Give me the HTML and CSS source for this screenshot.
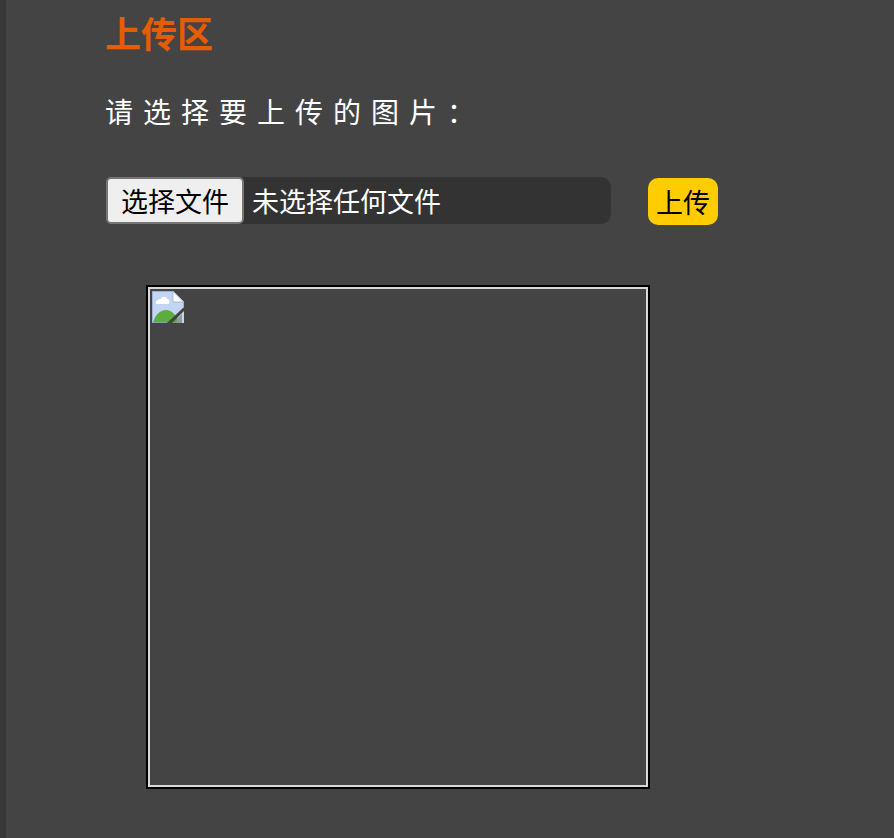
FILE: index.html
```html
<!DOCTYPE html>
<html lang="zh-CN">
<head>
<meta charset="utf-8">
<title>上传区</title>
<link rel="stylesheet" href="styles.css">
</head>
<body>
<div class="rail"></div>
<main class="content">
  <h2 class="title">上传区</h2>
  <p class="prompt">请选择要上传的图片：</p>
  <form class="upload-row">
    <div class="file-input">
      <button type="button" class="file-btn">选择文件</button>
      <span class="file-name">未选择任何文件</span>
    </div>
    <button type="button" class="submit">上传</button>
  </form>
  <div class="preview">
    <div class="preview-inner">
      <svg class="broken" width="32" height="32" viewBox="0 0 32 32" aria-hidden="true">
        <path d="M0 0H21L32 11V32H0Z" fill="#c3d5f2"/>
        <path d="M21 0L32 11H21Z" fill="#ffffff"/>
        <path d="M21 0V11H32" fill="none" stroke="#9fb4d6" stroke-width="0.8"/>
        <path d="M4 12C4 9 7 8 9 8C10 5 14 5 15 8C17 8 18 10 17 13H5C4 13 4 13 4 12Z" fill="#ffffff"/>
        <path d="M1 32C3 24 8 19 14 19C20 19 25 25 28 32Z" fill="#5cad3c"/>
        <path d="M15 32L32 16V20L20 32Z" fill="#444444"/>
        <path d="M26 27L30 23V32H24Z" fill="#8f9aa8"/>
        <path d="M0.4 32V0.4H21L31.6 11V17M0.4 31.6H15" fill="none" stroke="#8fa5c9" stroke-width="0.8"/>
      </svg>
    </div>
  </div>
</main>
</body>
</html>
```
FILE: styles.css
```css
* { box-sizing: border-box; }
html, body { margin: 0; height: 100%; }
body {
  background: #444444;
  color: #ffffff;
  font-family: "Liberation Sans", "Noto Sans CJK SC", sans-serif;
  display: flex;
  min-height: 838px;
  overflow: hidden;
}
.rail { width: 6px; background: #383838; flex: none; }
.content { padding: 0 0 0 100px; flex: 1; }
.title {
  margin: 0 0 0 -1px;
  padding-top: 14px;
  font-size: 36px;
  line-height: 44px;
  font-weight: 700;
  color: #e65c00;
}
.prompt {
  margin: 38px 0 0 -1px;
  height: 36px;
  font-size: 28px;
  line-height: 36px;
  letter-spacing: 10px;
}
.upload-row {
  display: flex;
  align-items: flex-start;
  margin-top: 45px;
}
.file-input {
  width: 505px;
  height: 47px;
  background: #333333;
  border-radius: 10px;
  display: flex;
  align-items: center;
  font-size: 27px;
}
.file-btn {
  width: 138px;
  height: 47px;
  padding: 0;
  background: #efefef;
  border: 2px solid #767676;
  border-radius: 5px;
  color: #000;
  font: inherit;
  font-size: 27px;
}
.file-name { margin-left: 8px; }
.submit {
  margin: 1px 0 0 37px;
  width: 70px;
  height: 47px;
  padding: 0;
  background: #ffcc00;
  border: none;
  border-radius: 10px;
  color: #000;
  font: inherit;
  font-size: 27px;
}
.preview {
  margin: 60px 0 0 40px;
  width: 504px;
  height: 504px;
  border: 2px solid #000;
}
.preview-inner {
  width: 100%;
  height: 100%;
  border: 2px solid #d8d8d8;
  background: #444444;
}
.broken { display: block; margin: 2px 0 0 2px; }
```
